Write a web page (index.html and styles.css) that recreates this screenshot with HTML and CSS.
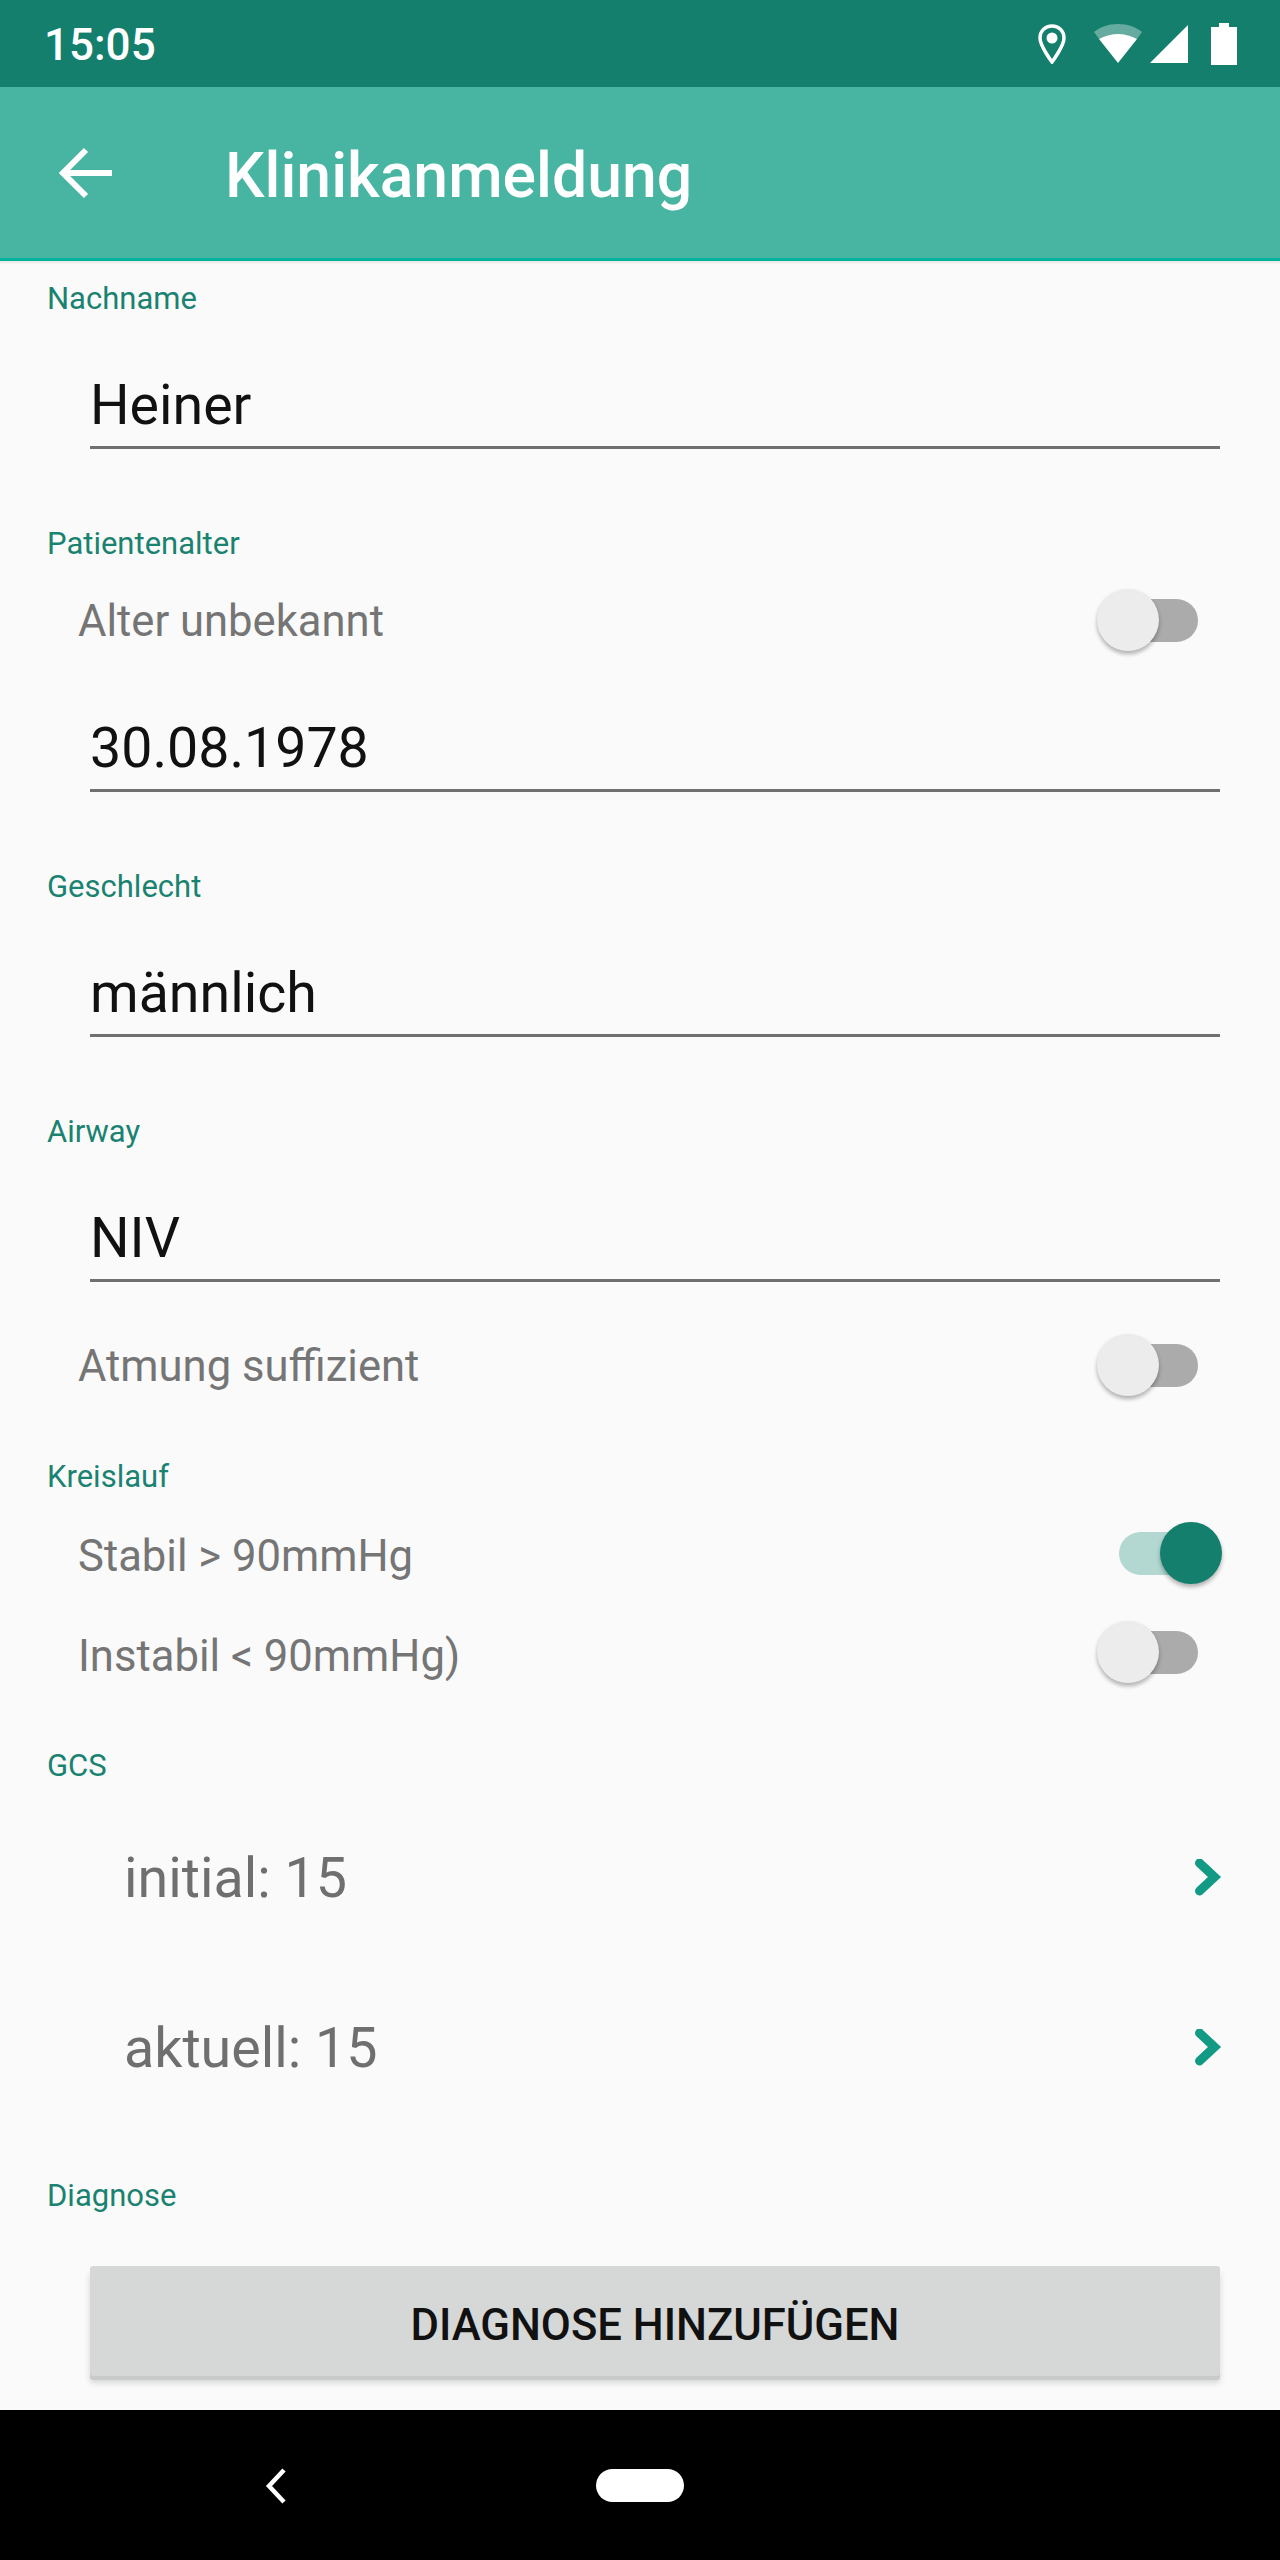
FILE: index.html
```html
<!DOCTYPE html>
<html lang="de">
<head>
    <meta charset="UTF-8">
    <meta name="viewport" content="width=device-width, initial-scale=1.0">
    <title>Klinikanmeldung</title>
    <link rel="stylesheet" href="styles.css">
</head>
<body>
    <div class="phone">
        <div class="status-bar">
            <span class="clock">15:05</span>
            <div class="status-icons">
                <svg class="icon-pin" width="28" height="40" viewBox="0 0 28 40"><path d="M14 2C7 2 2 7 2 14c0 8 12 24 12 24s12-16 12-24C26 7 21 2 14 2z" fill="none" stroke="#fff" stroke-width="3.5"/><circle cx="14" cy="14" r="5.5" fill="#fff"/></svg>
                <svg class="icon-wifi" width="48" height="40" viewBox="0 0 48 40"><path d="M0 8C6 3 14 0 24 0s18 3 24 8l-5 7C38 12 31 10 24 10S10 12 5 15z" fill="#fff" opacity=".35"/><path d="M5 15c5-3 12-5 19-5s14 2 19 5L24 39z" fill="#fff"/></svg>
                <svg class="icon-signal" width="38" height="38" viewBox="0 0 38 38"><path d="M38 0v38H0z" fill="#fff"/></svg>
                <svg class="icon-battery" width="26" height="42" viewBox="0 0 26 42"><path d="M8 0h10v4h8v38H0V4h8z" fill="#fff"/></svg>
            </div>
        </div>
        <header class="toolbar">
            <svg class="back-arrow" width="54" height="52" viewBox="0 0 54 52"><path d="M27 3L4 26l23 23M4 26h49" fill="none" stroke="#fff" stroke-width="6"/></svg>
            <h1>Klinikanmeldung</h1>
        </header>
        <main class="content">
            <label class="section-label first">Nachname</label>
            <div class="input-line">Heiner</div>

            <label class="section-label">Patientenalter</label>
            <div class="switch-row top-gap">
                <span>Alter unbekannt</span>
                <span class="switch"><span class="thumb"></span></span>
            </div>
            <div class="input-line">30.08.1978</div>

            <label class="section-label">Geschlecht</label>
            <div class="input-line">männlich</div>

            <label class="section-label">Airway</label>
            <div class="input-line">NIV</div>
            <div class="switch-row after-input">
                <span>Atmung suffizient</span>
                <span class="switch"><span class="thumb"></span></span>
            </div>

            <label class="section-label kreislauf">Kreislauf</label>
            <div class="switch-row stabil">
                <span>Stabil &gt; 90mmHg</span>
                <span class="switch on"><span class="thumb"></span></span>
            </div>
            <div class="switch-row tight">
                <span>Instabil &lt; 90mmHg)</span>
                <span class="switch"><span class="thumb"></span></span>
            </div>

            <label class="section-label gcs">GCS</label>
            <div class="gcs-list">
                <div class="gcs-row">
                    <span>initial: 15</span>
                    <svg width="28" height="38" viewBox="0 0 28 38"><path d="M4.5 4l15 14-15 14" fill="none" stroke="#129a84" stroke-width="9" stroke-linecap="round"/></svg>
                </div>
                <div class="gcs-row">
                    <span>aktuell: 15</span>
                    <svg width="28" height="38" viewBox="0 0 28 38"><path d="M4.5 4l15 14-15 14" fill="none" stroke="#129a84" stroke-width="9" stroke-linecap="round"/></svg>
                </div>
            </div>

            <label class="section-label diagnose">Diagnose</label>
            <button class="add-button">DIAGNOSE HINZUFÜGEN</button>
        </main>
        <nav class="nav-bar">
            <svg class="nav-back" width="24" height="36" viewBox="0 0 24 36"><path d="M20 2L5 18l15 16" fill="none" stroke="#fff" stroke-width="4.5"/></svg>
            <span class="nav-home"></span>
        </nav>
    </div>
</body>
</html>
```

FILE: styles.css
```css
* {
    box-sizing: border-box;
}
body {
    font-family: Roboto, "Liberation Sans", sans-serif;
    margin: 0;
    padding: 0;
    background-color: #fafafa;
}
.phone {
    width: 1280px;
    height: 2560px;
    display: flex;
    flex-direction: column;
    overflow: hidden;
}
.status-bar {
    height: 87px;
    background-color: #137f6c;
    display: flex;
    align-items: center;
    justify-content: space-between;
    padding: 0 43px 0 44px;
    color: #fff;
}
.clock {
    font-size: 44px;
    font-weight: 500;
    margin-top: 2px;
}
.status-icons {
    display: flex;
    align-items: center;
    gap: 8px;
}
.icon-pin {
    margin-right: 20px;
}
.icon-battery {
    margin-left: 15px;
}
.toolbar {
    height: 174px;
    background-color: #48b5a2;
    border-bottom: 3px solid #00b49c;
    box-shadow: 0 2px 2px rgba(0, 0, 0, 0.08);
    display: flex;
    align-items: center;
    padding-left: 59px;
    color: #fff;
}
.back-arrow {
    margin-right: 112px;
}
.toolbar h1 {
    margin: 5px 0 0;
    font-size: 62.5px;
    font-weight: 500;
}
.content {
    flex: 1;
    padding: 0 60px 0 47px;
}
.section-label {
    display: block;
    height: 40px;
    line-height: 43px;
    font-size: 31px;
    color: #1a8270;
    margin-top: 73px;
}
.section-label.first {
    margin-top: 16px;
}
.section-label.kreislauf {
    margin-top: 50px;
}
.section-label.gcs {
    margin-top: 49px;
}
.section-label.diagnose {
    margin-top: 41px;
}
.input-line {
    height: 132px;
    margin-left: 43px;
    padding: 59px 0 10px 0;
    line-height: 60px;
    font-size: 55.5px;
    color: #111;
    border-bottom: 3px solid #707070;
}
.switch-row {
    height: 80px;
    margin-left: 31px;
    margin-right: -2px;
    display: flex;
    align-items: center;
    justify-content: space-between;
    font-size: 43.6px;
    color: #757575;
}
.switch-row > span:first-child {
    margin-top: 2px;
}
.switch-row.top-gap {
    margin-top: 18px;
}
.switch-row.stabil {
    margin-top: 20px;
}
.switch-row.stabil .switch {
    margin-top: -4px;
}
.switch-row.tight {
    margin-top: 20px;
}
.switch-row.tight .switch {
    margin-top: -6px;
}
.switch-row.after-input {
    margin-top: 43px;
}
.switch {
    position: relative;
    display: block;
    width: 125px;
    height: 62px;
}
.switch::before {
    content: "";
    position: absolute;
    left: 22px;
    right: 24px;
    top: 10px;
    height: 43px;
    border-radius: 22px;
    background-color: #ababab;
}
.thumb {
    position: absolute;
    left: 0;
    top: 0;
    width: 62px;
    height: 62px;
    border-radius: 50%;
    background-color: #ececec;
    box-shadow: 0 3px 4px rgba(0, 0, 0, 0.3);
}
.switch.on::before {
    background-color: #b2d8d1;
}
.switch.on .thumb {
    left: 63px;
    background-color: #137f6c;
}
.gcs-list {
    margin-top: 9px;
}
.gcs-row {
    height: 170px;
    display: flex;
    align-items: center;
    justify-content: space-between;
    margin-left: 77px;
    margin-right: -3px;
    font-size: 55.6px;
    color: #6f6f6f;
}
.add-button {
    display: block;
    width: 1130px;
    height: 110px;
    margin: 52px 0 0 43px;
    padding: 8px 0 0;
    background-color: #d6d7d7;
    border: none;
    border-radius: 3px;
    font-family: inherit;
    font-size: 43.6px;
    font-weight: 500;
    color: #111;
    box-shadow: 0 4px 0 #c9caca, 0 7px 6px rgba(0, 0, 0, 0.15);
}
.nav-bar {
    height: 150px;
    background-color: #000;
    position: relative;
}
.nav-back {
    position: absolute;
    left: 264px;
    top: 58px;
}
.nav-home {
    position: absolute;
    left: 596px;
    top: 59px;
    width: 88px;
    height: 33px;
    border-radius: 17px;
    background-color: #fff;
}
```
